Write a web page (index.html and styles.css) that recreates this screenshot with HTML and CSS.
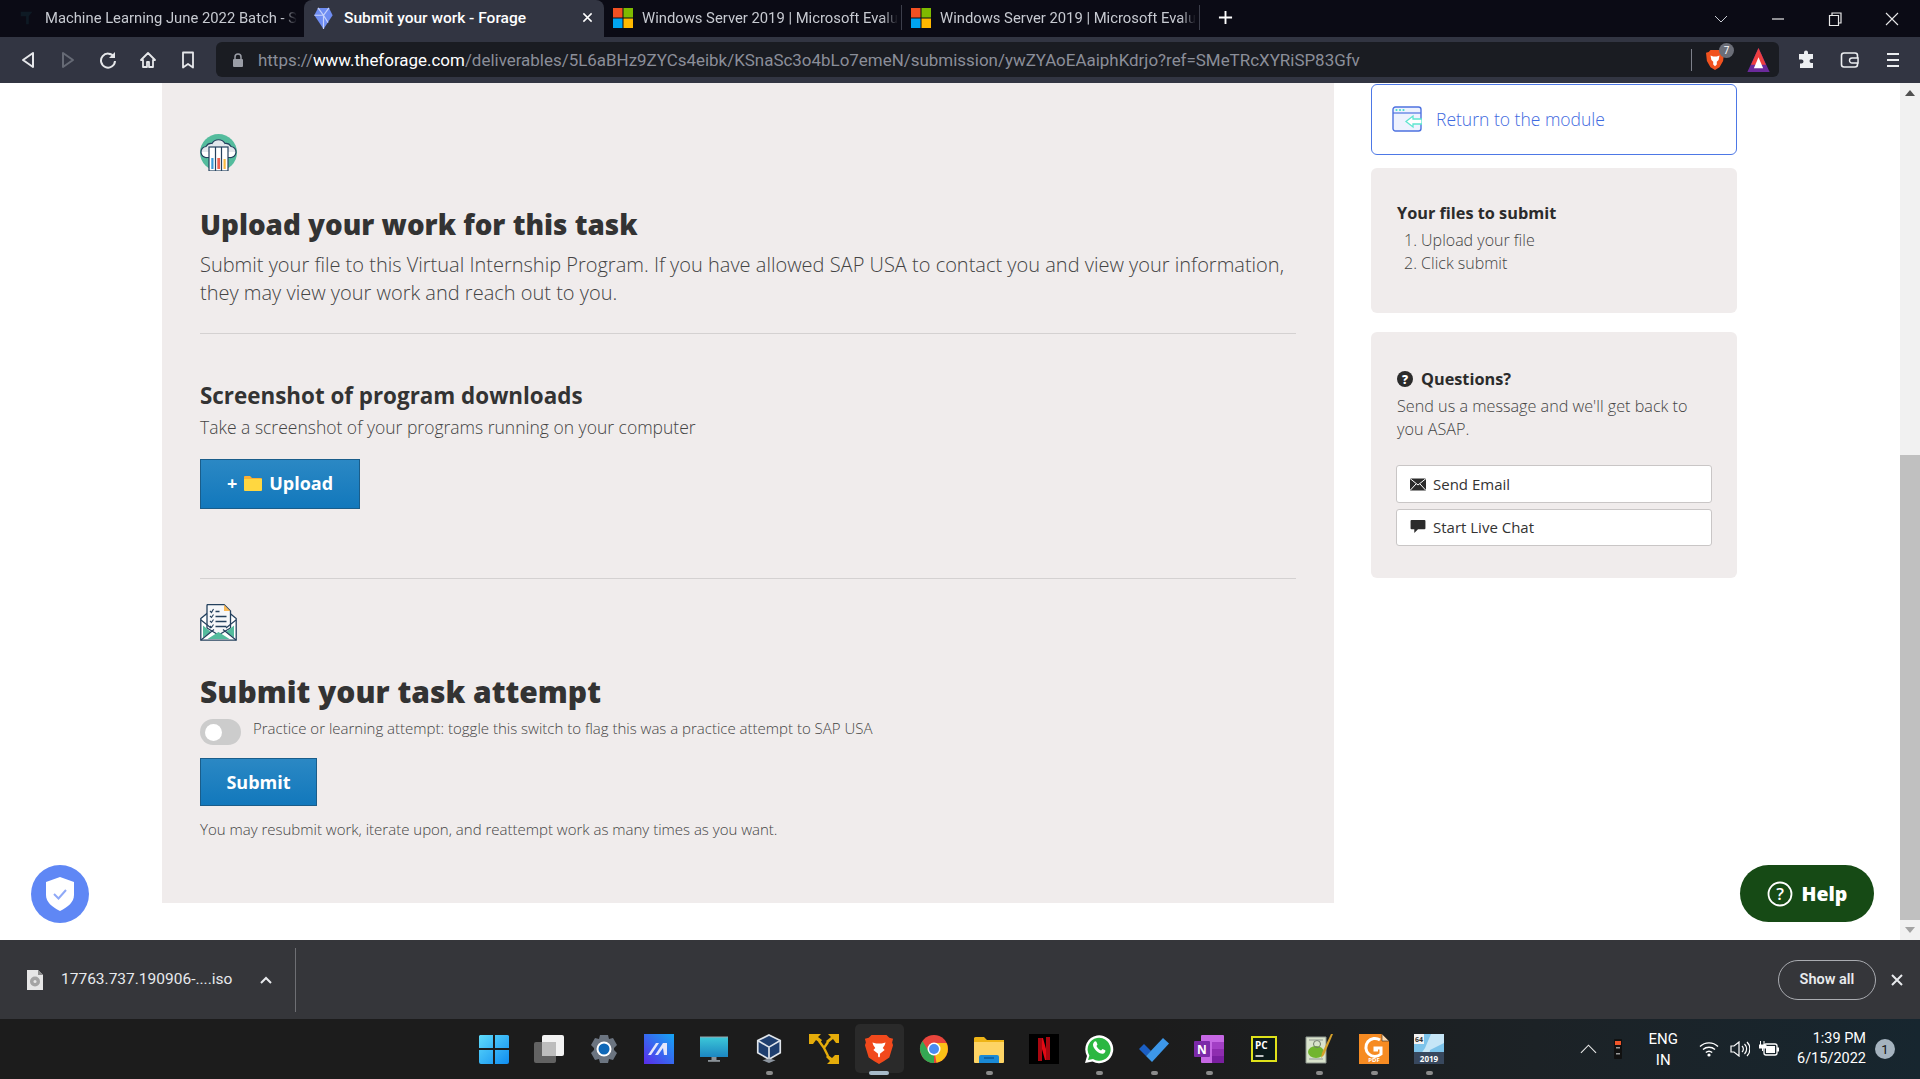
FILE: index.html
```html
<!DOCTYPE html>
<html lang="en">
<head>
<meta charset="utf-8">
<title>Submit your work - Forage</title>
<link rel="stylesheet" href="styles.css">
</head>
<body>
<div class="app">
  <header class="tabstrip">
    <div class="tab tab-first">
      <svg class="fav" viewBox="0 0 20 20"><path d="M3 3h13l-4 5v9H9V8H3z" fill="#0e1a24"/></svg>
      <span class="tab-title">Machine Learning June 2022 Batch - S</span>
    </div>
    <div class="tab tab-active">
      <svg class="fav" viewBox="0 0 20 24"><path d="M4 1h12l4 8-10 15L0 9z" fill="#6f8df2"/><path d="M4 1l6 8 6-8M0 9h10l5 8M10 9v15" fill="none" stroke="#c6d2fb" stroke-width="1.3"/></svg>
      <span class="tab-title">Submit your work - Forage</span>
      <svg class="tab-x" viewBox="0 0 12 12"><path d="M1.500 1.500l9 9m0-9l-9 9" stroke="#fff" stroke-width="1.600"/></svg>
    </div>
    <div class="tab tab-ms">
      <svg class="fav" viewBox="0 0 20 20"><rect width="9.500" height="9.500" fill="#f25022"/><rect x="10.500" width="9.500" height="9.500" fill="#7fba00"/><rect y="10.500" width="9.500" height="9.500" fill="#00a4ef"/><rect x="10.500" y="10.500" width="9.500" height="9.500" fill="#ffb900"/></svg>
      <span class="tab-title">Windows Server 2019 | Microsoft Evalu</span>
    </div>
    <div class="tab tab-ms">
      <svg class="fav" viewBox="0 0 20 20"><rect width="9.500" height="9.500" fill="#f25022"/><rect x="10.500" width="9.500" height="9.500" fill="#7fba00"/><rect y="10.500" width="9.500" height="9.500" fill="#00a4ef"/><rect x="10.500" y="10.500" width="9.500" height="9.500" fill="#ffb900"/></svg>
      <span class="tab-title">Windows Server 2019 | Microsoft Evalu</span>
    </div>
    <svg class="newtab" viewBox="0 0 16 16"><path d="M8 1v14M1 8h14" stroke="#fff" stroke-width="2"/></svg>
    <div class="winctl">
      <svg class="winbtn" viewBox="0 0 14 14"><path d="M1 4l6 6 6-6" fill="none" stroke="#c9ccd3"/></svg>
      <svg class="winbtn" viewBox="0 0 14 14"><path d="M1 7h12" stroke="#e8e8e8" stroke-width="1.200"/></svg>
      <svg class="winbtn" viewBox="0 0 14 14"><path d="M1.500 3.500h9v10h-9zM4 3.500V1h9v10h-2.500" fill="none" stroke="#e8e8e8" stroke-width="1.200"/></svg>
      <svg class="winbtn" viewBox="0 0 14 14"><path d="M1 1l12 12m0-12L1 13" stroke="#e8e8e8" stroke-width="1.100"/></svg>
    </div>
  </header>

  <nav class="toolbar">
    <div class="tool"><svg class="ticon" viewBox="0 0 16 18"><path d="M13 2L3 9l10 7z" fill="none" stroke="#e6e7ea" stroke-width="2" stroke-linejoin="round"/></svg></div>
    <div class="tool"><svg class="ticon" viewBox="0 0 16 18"><path d="M3 2l10 7-10 7z" fill="none" stroke="#666a75" stroke-width="2" stroke-linejoin="round"/></svg></div>
    <div class="tool"><svg class="ticon" viewBox="0 0 18 18"><path d="M15 6a7 7 0 1 0 1 4" fill="none" stroke="#e6e7ea" stroke-width="2"/><path d="M16 1v6h-6z" fill="#e6e7ea"/></svg></div>
    <div class="tool"><svg class="ticon" viewBox="0 0 18 18"><path d="M9 2L2 9h2v7h4v-5h2v5h4V9h2z" fill="none" stroke="#e6e7ea" stroke-width="1.800" stroke-linejoin="round"/></svg></div>
    <div class="tool"><svg class="ticon" viewBox="0 0 16 18"><path d="M3 1.500h10v15l-5-3.500-5 3.500z" fill="none" stroke="#e6e7ea" stroke-width="1.800" stroke-linejoin="round"/></svg></div>
    <div class="omnibox">
      <svg class="lock" viewBox="0 0 12 14"><path d="M3 6V4a3 3 0 0 1 6 0v2" fill="none" stroke="#9a9da6" stroke-width="1.500"/><rect x="1" y="6" width="10" height="8" rx="1" fill="#9a9da6"/></svg>
      <div class="url">https://<b class="host">www.theforage.com</b>/deliverables/5L6aBHz9ZYCs4eibk/KSnaSc3o4bLo7emeN/submission/ywZYAoEAaiphKdrjo?ref=SMeTRcXYRiSP83Gfv</div>
      <span class="omni-sep"></span>
      <div class="brave-ext">
        <svg class="brave-small" viewBox="0 0 20 24"><path d="M5 1h10l2 2 3 1-1 9-4 7-5 3-5-3-4-7L0 4l3-1z" fill="#f1521f"/><path d="M5 7l3 1h4l3-1-1 5-2 2v3l-2 2-2-2v-3l-2-2z" fill="#fff"/></svg>
        <span class="badge-seven">7</span>
      </div>
      <svg class="bat" viewBox="0 0 24 28"><path d="M12 1l12 26H0z" fill="#6b2a9b"/><path d="M12 1l8 18H4z" fill="#ee3f3f"/><path d="M12 11l5 12H7z" fill="#fff"/></svg>
    </div>
    <div class="tool tool-r"><svg class="ticon2" viewBox="0 0 20 20"><path d="M7 2.500a2 2 0 0 1 4 0V4h5v5h-1.500a2 2 0 0 0 0 4H16v5H3v-4.500h1.500a2 2 0 0 0 0-4H2V4h5z" fill="#eceef1"/></svg></div>
    <div class="tool tool-r"><svg class="ticon2" viewBox="0 0 20 20"><rect x="1.500" y="3" width="16" height="14" rx="2.500" fill="none" stroke="#eceef1" stroke-width="1.600"/><path d="M18 8h-6a2 2 0 0 0 0 5h6z" fill="#2f3241" stroke="#eceef1" stroke-width="1.400"/></svg></div>
    <div class="tool tool-r"><svg class="ticon2" viewBox="0 0 20 20"><path d="M4 4h12M4 10h12M4 16h12" stroke="#eceef1" stroke-width="2"/></svg></div>
  </nav>

  <div class="viewport">
    <div class="page">
      <main class="panel">
        <svg class="art" viewBox="0 0 37 37">
          <circle cx="18.500" cy="18.500" r="18.500" fill="#54bc9d"/>
          <path d="M7 23.500a5.500 5.500 0 0 1-1-11 6 6 0 0 1 6-3 7.500 7.500 0 0 1 13 0 6 6 0 0 1 6 3 5.500 5.500 0 0 1-1 11z" fill="#e3e7ec" stroke="#24415e" stroke-width="1.200"/>
          <path d="M2 18a5 5 0 0 0 5 5h23a5 5 0 0 0 5-5z" fill="#fff"/>
          <rect x="9" y="13" width="19" height="24" fill="#fff" stroke="#24415e" stroke-width="1.200"/>
          <path d="M15.500 13v24M21.500 13v24" stroke="#24415e" stroke-width="1.200"/>
          <rect x="11.300" y="24" width="2.200" height="11" fill="#3b9bd8"/><rect x="17.300" y="24" width="2.800" height="11" fill="#f0614f"/><rect x="23.500" y="25" width="2.200" height="10" fill="#f9b942"/>
        </svg>
        <h1 class="title title-upload">Upload your work for this task</h1>
        <p class="lead">Submit your file to this Virtual Internship Program. If you have allowed SAP USA to contact you and view your information, they may view your work and reach out to you.</p>
        <hr class="rule rule-a">
        <h2 class="subtitle">Screenshot of program downloads</h2>
        <p class="hint">Take a screenshot of your programs running on your computer</p>
        <button class="cta cta-upload">
          <span>+</span>
          <svg class="folder" viewBox="0 0 18 16"><path d="M0 2a1 1 0 0 1 1-1h5l2 2h9a1 1 0 0 1 1 1v2H0z" fill="#fbb034"/><path d="M0 4h18v11a1 1 0 0 1-1 1H1a1 1 0 0 1-1-1z" fill="#ffd740"/></svg>
          <span>Upload</span>
        </button>
        <hr class="rule rule-b">
        <svg class="art" viewBox="0 0 37 37">
          <path d="M.8 14.500L7 9.500h23l6.200 5v21.700H.8z" fill="#fff" stroke="#24415e" stroke-width="1.300"/>
          <path d="M7 24V1.500q0-1 1-1h16l6.500 6.500v17l-12 7z" fill="#f6f7f9" stroke="#24415e" stroke-width="1.300"/>
          <path d="M24 .8l6.200 6.200H24z" fill="#fbb955"/>
          <path d="M10 7l1.500 1.500L13.500 5M10 12l1.500 1.500 2-3M10 17l1.500 1.500 2-3M10 22l1.500 1.500 2-3" fill="none" stroke="#24415e" stroke-width="1.100"/>
          <path d="M15.500 7.500h4M15.500 12.500h11M15.500 17.500h11M15.500 22.500h11" stroke="#24415e" stroke-width="1.300"/>
          <path d="M3 21.500l8 6.500-8 5.500zM34 21.500l-8 6.500 8 5.500zM7.500 35l11-7 11 7z" fill="#54bc9d"/>
          <path d="M1 36l13-10.500M36 36L23 25.500M1 16l10 8M36 16l-10 8" fill="none" stroke="#24415e" stroke-width="1.200"/>
        </svg>
        <h1 class="title title-submit">Submit your task attempt</h1>
        <div class="switch-row">
          <span class="switch"><span class="knob"></span></span>
          <span class="switch-label">Practice or learning attempt: toggle this switch to flag this was a practice attempt to SAP USA</span>
        </div>
        <button class="cta cta-submit">Submit</button>
        <p class="note">You may resubmit work, iterate upon, and reattempt work as many times as you want.</p>
      </main>

      <aside class="side">
        <a class="return-card">
          <svg class="return-icon" viewBox="0 0 30 26">
            <rect x="1" y="1" width="28" height="24" rx="2.500" fill="#eef2fe" stroke="#4d72e0" stroke-width="1.400"/>
            <path d="M1 7h28" stroke="#4d72e0" stroke-width="1.200"/>
            <circle cx="4.500" cy="4" r="1.100" fill="#48e0c8"/><circle cx="8" cy="4" r="1.100" fill="#48e0c8"/><circle cx="11.500" cy="4" r="1.100" fill="#48e0c8"/>
            <path d="M30 13h-9v-3l-7 5.500 7 5.500v-3h9z" fill="#fff" stroke="#5ee6cf" stroke-width="1.300"/>
          </svg>
          <span>Return to the module</span>
        </a>
        <section class="card card-files">
          <h3 class="card-title">Your files to submit</h3>
          <ol class="steps">
            <li>Upload your file</li>
            <li>Click submit</li>
          </ol>
        </section>
        <section class="card card-q">
          <h3 class="card-title q-title">
            <svg class="q-icon" viewBox="0 0 16 16"><circle cx="8" cy="8" r="8" fill="#2b2b2b"/><text x="8" y="12.500" text-anchor="middle" class="q-glyph">?</text></svg>
            Questions?
          </h3>
          <p class="q-copy">Send us a message and we'll get back to you ASAP.</p>
          <a class="contact">
            <svg class="contact-ico" viewBox="0 0 16 12"><rect width="16" height="12" fill="#2b2b2b"/><path d="M0 0l8 6.500L16 0M0 12l6-6.500M16 12l-6-6.500" fill="none" stroke="#fff" stroke-width="1"/></svg>
            Send Email
          </a>
          <a class="contact contact-chat">
            <svg class="contact-ico" viewBox="0 0 16 14"><path d="M1 0h14a1 1 0 0 1 1 1v8a1 1 0 0 1-1 1H8l-4 4v-4H1a1 1 0 0 1-1-1V1a1 1 0 0 1 1-1z" fill="#2b2b2b"/></svg>
            Start Live Chat
          </a>
        </section>
      </aside>
    </div>

    <div class="scrollbar">
      <svg class="arrow" viewBox="0 0 10 6"><path d="M5 0l5 6H0z" fill="#505050"/></svg>
      <div class="track"><div class="thumb"></div></div>
      <svg class="arrow" viewBox="0 0 10 6"><path d="M0 0h10L5 6z" fill="#a3a3a3"/></svg>
    </div>

    <div class="shield-btn">
      <svg viewBox="0 0 28 34" class="shield"><path d="M14 0l14 5v13c0 7-6 12-14 16C6 30 0 25 0 18V5z" fill="#fff"/><path d="M8 17l4.500 4.500L20 13" fill="none" stroke="#8fa9f7" stroke-width="2"/></svg>
    </div>
    <div class="help-btn">
      <svg class="help-ico" viewBox="0 0 26 26"><circle cx="13" cy="13" r="11.500" fill="none" stroke="#fff" stroke-width="1.800"/><text x="13" y="19" text-anchor="middle" class="help-glyph">?</text></svg>
      <span>Help</span>
    </div>
  </div>

  <div class="downloads">
    <svg class="dl-file" viewBox="0 0 16 20"><path d="M0 0h11l5 5v15H0z" fill="#e6e6e6"/><path d="M11 0v5h5z" fill="#8c8c8c"/><circle cx="8" cy="11.500" r="5" fill="#a4a4a4"/><circle cx="8" cy="11.500" r="1.500" fill="#e6e6e6"/></svg>
    <span class="dl-name">17763.737.190906-....iso</span>
    <svg class="dl-caret" viewBox="0 0 12 8"><path d="M1 7l5-5 5 5" fill="none" stroke="#e8eaed" stroke-width="2"/></svg>
    <span class="dl-sep"></span>
    <span class="dl-spacer"></span>
    <span class="showall">Show all</span>
    <svg class="dl-close" viewBox="0 0 12 12"><path d="M1 1l10 10m0-10L1 11" stroke="#e8eaed" stroke-width="2"/></svg>
  </div>

  <footer class="taskbar">
    <span></span>
    <div class="apps">
      <div class="app-slot"><svg class="appicon" viewBox="0 0 30 30"><defs><linearGradient id="w" x1="0" y1="0" x2="1" y2="1"><stop offset="0" stop-color="#5fdcfb"/><stop offset="1" stop-color="#0f8cf0"/></linearGradient></defs><path d="M1 1h13v13H0V2zM16 1h12a2 2 0 0 1 2 1v12H16zM0 16h14v14H2a2 2 0 0 1-2-2zM16 16h14v12a2 2 0 0 1-2 2H16z" fill="url(#w)"/></svg></div>
      <div class="app-slot"><svg class="appicon" viewBox="0 0 30 30"><rect x="8" y="1" width="22" height="21" rx="2" fill="#f2f2f2"/><rect x="0" y="8" width="22" height="21" rx="2" fill="#6a6a6a" fill-opacity=".9"/><rect x="8" y="8" width="14" height="14" fill="#bdbdbd"/></svg></div>
      <div class="app-slot"><svg class="appicon" viewBox="0 0 30 30"><path d="M11 1h8l1 4 4-1 4 7-3 3v2l3 3-4 7-4-1-1 4h-8l-1-4-4 1-4-7 3-3v-2L2 11l4-7 4 1z" fill="#6b7480"/><circle cx="15" cy="15" r="7.500" fill="#fff"/><circle cx="15" cy="15" r="5.500" fill="#0f68b8"/></svg></div>
      <div class="app-slot"><svg class="appicon" viewBox="0 0 30 30"><defs><linearGradient id="m" x1="0" y1="1" x2="1" y2="0"><stop offset="0" stop-color="#5a2bea"/><stop offset="1" stop-color="#14a6f5"/></linearGradient></defs><rect width="30" height="30" fill="url(#m)"/><path d="M4 21l8-12h3l-8 12zM11 21l8-12h4v12h-3l-1-7-5 7z" fill="#e4e6fb"/></svg></div>
      <div class="app-slot"><svg class="appicon" viewBox="0 0 30 30"><defs><linearGradient id="mon" x1="0" y1="0" x2="0" y2="1"><stop offset="0" stop-color="#3cc8d8"/><stop offset="1" stop-color="#1c86c2"/></linearGradient></defs><rect x="1" y="3" width="28" height="20" fill="url(#mon)"/><path d="M1 3h28" stroke="#9aa6ad" stroke-width="1"/><rect x="12.500" y="23" width="5" height="3" fill="#8b9298"/><rect x="9" y="26" width="12" height="1.800" fill="#8b9298"/></svg></div>
      <div class="app-slot app-on"><svg class="appicon" viewBox="0 0 30 32"><path d="M15 1l12 6v13l-12 7-12-7V7z" fill="#1f3f6f" stroke="#dfe4ea" stroke-width="1.800"/><path d="M3 7l12 7 12-7M15 14v13" fill="none" stroke="#dfe4ea" stroke-width="1.800"/><path d="M8 28l7 3 7-3-7-2z" fill="#8e96a0"/></svg></div>
      <div class="app-slot"><svg class="appicon" viewBox="0 0 30 30"><path d="M0 0h12L9 3l4 3-2 3-4-3-3 4H0zM30 0H19l3 3-5 4 2 2 5-4 3 4h3zM30 30H18l3-3-4-4 2-2 4 3 3-3h4z" fill="#e5ac0a"/><path d="M10 7l5 7 4-6M15 14l4 8" fill="none" stroke="#e5ac0a" stroke-width="2.400"/></svg></div>
      <div class="app-slot app-brave"><svg class="appicon" viewBox="0 0 30 32"><path d="M7 1h16l3 3 4 1-1 4 1 3-4 13-6 4-5 3-5-3-6-4L0 12l1-3-1-4 4-1z" fill="#f1491c"/><path d="M8 9l4 1h6l4-1-1 3-2 3 2 2-5 4v3l-1 1-1-1v-3l-5-4 2-2-2-3z" fill="#fff"/></svg><span class="bar-active"></span></div>
      <div class="app-slot"><svg class="appicon" viewBox="0 0 30 30"><circle cx="15" cy="15" r="14" fill="#e8453c"/><path d="M15 15L3 22a14 14 0 0 0 12 7z" fill="#34a853"/><path d="M3 22A14 14 0 0 1 3.500 7L10 18l5 11a14 14 0 0 1-12-7z" fill="#34a853"/><path d="M15 9h12.500a14 14 0 0 1-10 19.700L15 15z" fill="#fbc116"/><circle cx="15" cy="15" r="6.500" fill="#fff"/><circle cx="15" cy="15" r="5" fill="#4a8cf0"/></svg></div>
      <div class="app-slot app-on"><svg class="appicon" viewBox="0 0 30 28"><path d="M0 3a2 2 0 0 1 2-1h8l3 3h17v21H0z" fill="#eeb416"/><path d="M0 7h30v20a1 1 0 0 1-1 1H1a1 1 0 0 1-1-1z" fill="#fdd465"/><path d="M5 28v-6a2 2 0 0 1 2-2h16a2 2 0 0 1 2 2v6z" fill="#1a8ad6"/><path d="M10 23h10" stroke="#0d5a9a" stroke-width="1.500"/></svg></div>
      <div class="app-slot"><svg class="appicon" viewBox="0 0 30 30"><rect width="30" height="30" fill="#000"/><path d="M10 4h4l6 22h-4z" fill="#e50914"/><rect x="9" y="4" width="4" height="23" fill="#a80710"/><rect x="17" y="3" width="4" height="23" fill="#a80710"/></svg></div>
      <div class="app-slot app-on"><svg class="appicon" viewBox="0 0 30 30"><path d="M1 29l2-7A14 14 0 1 1 8.500 27.500z" fill="#fff"/><path d="M4 26l1.400-4.600A11.500 11.500 0 1 1 9 25z" fill="#2bb741"/><path d="M10 8c1-1 2-1 2.500 0l1 2.500-1 1.500c1 2 2.500 3.500 4.500 4.500l1.500-1.500 2.800 1.300c.5 1-.5 3-2.300 3.500-4 .5-10-5-10-9 0-1 .7-2 1-2.800z" fill="#fff"/></svg></div>
      <div class="app-slot app-on"><svg class="appicon" viewBox="0 0 30 30"><path d="M0 15l5-5 7 7-5 5z" fill="#1b5fc4"/><path d="M7 22l17-18 6 5.500L13 28z" fill="#3d97e8"/></svg></div>
      <div class="app-slot app-on"><svg class="appicon" viewBox="0 0 30 30"><rect x="7" y="1" width="23" height="28" rx="1" fill="#c667e4"/><rect x="18" y="8" width="12" height="7" fill="#a33fc5"/><rect x="18" y="15" width="12" height="7" fill="#8f2db0"/><rect x="18" y="22" width="12" height="7" fill="#7a1fa0"/><rect y="7" width="16" height="16" rx="1" fill="#7b2aa8"/><text x="8" y="19.500" text-anchor="middle" class="svg-n">N</text></svg></div>
      <div class="app-slot"><svg class="appicon appicon-sq" viewBox="0 0 26 26"><rect width="26" height="26" fill="#dfe21a"/><rect x="2" y="2" width="22" height="22" fill="#0b1a1a"/><text x="4" y="13" class="svg-pc">PC</text><path d="M4.500 20h8" stroke="#fff" stroke-width="1.500"/></svg></div>
      <div class="app-slot app-on"><svg class="appicon" viewBox="0 0 30 30"><path d="M2 3h20v26H2z" fill="#d9e3cc" stroke="#8f9890"/><ellipse cx="12" cy="18" rx="8" ry="6" fill="#72b52e"/><circle cx="13" cy="10" r="3.500" fill="none" stroke="#6f7b6a"/><path d="M5 6h14M5 25h14" stroke="#8f9890"/><path d="M29 0l-9 21-3 3 1-5L27 0z" fill="#d4a02b"/></svg></div>
      <div class="app-slot app-on"><svg class="appicon" viewBox="0 0 30 30"><path d="M0 0h23l7 7v23H0z" fill="#f68b22"/><path d="M23 0l7 7h-7z" fill="#fbd9b0" stroke="#2b2b2b" stroke-width=".6"/><path d="M21 6a9 9 0 1 0 1 14v-6h-6v2h3" fill="none" stroke="#fff" stroke-width="3"/><text x="15" y="28" text-anchor="middle" class="svg-pdf">PDF</text></svg></div>
      <div class="app-slot app-on"><svg class="appicon" viewBox="0 0 30 30"><rect width="30" height="30" fill="#7cc3ea"/><path d="M17 0l-6 14L0 30h14l2-14 14-7V0z" fill="#c6e6f7"/><rect width="10" height="10" fill="#f2f2f2"/><text x="5" y="8" text-anchor="middle" class="svg-64">64</text><rect y="18" width="30" height="12" fill="#38485e"/><text x="15" y="27.500" text-anchor="middle" class="svg-2019">2019</text></svg></div>
    </div>
    <div class="tray">
      <svg class="t-caret" viewBox="0 0 18 10"><path d="M1 9l8-8 8 8" fill="none" stroke="#e8e8e8" stroke-width="1.200"/></svg>
      <svg class="t-light" viewBox="0 0 8 20"><rect width="8" height="20" rx="1" fill="#111"/><rect x="1" y="2" width="6" height="4" fill="#f0552a"/><rect x="2" y="8" width="4" height="1.500" fill="#999"/><rect x="2" y="14" width="4" height="1.500" fill="#999"/></svg>
      <div class="t-lang"><span>ENG</span><span>IN</span></div>
      <svg class="t-wifi" viewBox="0 0 20 16"><path d="M1 5.500a13 13 0 0 1 18 0M4 8.500a9 9 0 0 1 12 0M6.800 11.500a5 5 0 0 1 6.400 0" fill="none" stroke="#fff" stroke-width="1.400"/><circle cx="10" cy="14" r="1.600" fill="#fff"/></svg>
      <svg class="t-vol" viewBox="0 0 20 16"><path d="M1 5h3l5-4v14l-5-4H1z" fill="none" stroke="#fff" stroke-width="1.200"/><path d="M12 5a4 4 0 0 1 0 6M14.500 3a7 7 0 0 1 0 10M17 1a10 10 0 0 1 0 14" fill="none" stroke="#fff" stroke-width="1.200"/></svg>
      <svg class="t-bat" viewBox="0 0 20 16"><rect x="5" y="3" width="13" height="11" rx="2" fill="none" stroke="#fff" stroke-width="1.300"/><rect x="7" y="5" width="9" height="7" fill="#fff"/><rect x="18" y="6.500" width="2" height="4" fill="#fff"/><path d="M0 4h7v3H0zM1.500 0v4M5 0v4M3.500 7v3" stroke="#fff" fill="#fff"/></svg>
      <div class="t-clock"><span>1:39 PM</span><span>6/15/2022</span></div>
      <span class="t-badge">1</span>
    </div>
  </footer>
</div>
</body>
</html>
```
FILE: styles.css
```css
* { box-sizing: border-box; }
html, body { margin: 0; height: 100%; overflow: hidden; }
body { font-family: "Open Sans", "Noto Sans", sans-serif; color: #333; background: #fff; }
h1, h2, h3, p, ol { margin: 0; padding: 0; }

.app { display: flex; flex-direction: column; height: 1079px; }

/* browser tab strip */
.tabstrip { display: flex; height: 37px; background: #0b0b15; flex: none; align-items: stretch; }
.tab { display: flex; align-items: center; width: 298px; font-family: Roboto, sans-serif; font-size: 14.800px; color: #c7cad1; position: relative; flex: none; padding-bottom: 2px; }
.tab-first { width: 304px; padding-left: 18px; }
.tab-first .fav { width: 18px; height: 18px; margin-right: 9px; }
.tab-active { width: 300px; background: #323542; color: #fff; font-weight: 500; font-size: 15.500px; padding-left: 10px; border-radius: 8px 8px 0 0; }
.tab-active .fav { width: 19px; height: 22px; margin-right: 11px; }
.tab-ms { padding-left: 9px; padding-bottom: 0; border-right: 1px solid #3c3e4a; height: 25px; margin-top: 5px; }
.tab-ms .fav { width: 20px; height: 20px; margin-right: 9px; flex: none; }
.tab-title { flex: 1; white-space: nowrap; }
.tab-first .tab-title, .tab-ms .tab-title { -webkit-mask-image: linear-gradient(to right, #000 94%, transparent 100%); mask-image: linear-gradient(to right, #000 94%, transparent 100%); flex: none; }
.tab-x { width: 11px; height: 11px; margin: 0 11px 0 8px; flex: none; }
.newtab { width: 15px; height: 15px; align-self: center; margin: 0 0 2px 18px; flex: none; }
.winctl { margin-left: auto; display: flex; align-items: center; }
.winbtn { width: 14px; height: 14px; margin-right: 43px; }
.winbtn:last-child { margin-right: 21px; }

/* toolbar */
.toolbar { display: flex; height: 46px; background: #323542; padding: 5px 6px 6px 8px; flex: none; align-items: stretch; }
.tool { width: 40px; display: flex; align-items: center; justify-content: center; flex: none; }
.tool-r { width: 43px; }
.ticon { width: 18px; height: 18px; }
.ticon2 { width: 20px; height: 20px; }
.omnibox { flex: 1; margin: 0 6px 0 8px; background: #1a1c22; border-radius: 6px; display: flex; align-items: center; padding: 0 9px 0 16px; }
.lock { width: 12px; height: 14px; flex: none; margin-right: 14px; }
.url { font-family: Roboto, sans-serif; font-size: 16.950px; color: #8b8e99; white-space: nowrap; flex: 1; }
.host { font-weight: 400; color: #fff; }
.omni-sep { width: 1px; height: 22px; background: #7d808a; margin-right: 14px; }
.brave-ext { position: relative; display: flex; margin-right: 23px; }
.brave-small { width: 18px; height: 22px; }
.badge-seven { position: absolute; left: 13px; top: -6px; width: 15px; height: 15px; border-radius: 50%; background: #6b6e78; color: #fff; font-size: 10px; display: flex; align-items: center; justify-content: center; font-family: Roboto, sans-serif; }
.bat { width: 23px; height: 26px; }

/* page viewport */
.viewport { flex: 1; min-height: 0; display: flex; position: relative; overflow: hidden; background: #fff; }
.page { flex: 1; display: flex; align-items: flex-start; gap: 37px; padding-left: 162px; }
.panel { width: 1172px; height: 820px; flex: none; background: #f0ecec; padding: 51px 38px 0 38px; display: flex; flex-direction: column; align-items: flex-start; }
.art { width: 37px; height: 37px; flex: none; display: block; }
.title { line-height: 40px; font-weight: 800; color: #333; }
.title-upload { font-size: 27.800px; margin-top: 33px; }
.title-submit { font-size: 30px; margin-top: 31px; }
.lead { font-size: 20px; line-height: 28px; font-weight: 300; color: #444; margin-top: 7px; }
.rule { width: 100%; border: 0; border-top: 1px solid #d4d1d1; margin: 0; flex: none; }
.rule-a { margin-top: 26px; }
.rule-b { margin-top: 69px; margin-bottom: 25px; }
.subtitle { font-size: 22.400px; line-height: 32px; font-weight: 700; color: #333; margin-top: 46px; }
.hint { font-size: 17.500px; line-height: 26px; font-weight: 300; color: #444; margin-top: 2px; }
.cta { border: 1px solid #1a5d8a; background: linear-gradient(#2b88c4, #1278bc); color: #fff; font-family: inherit; font-weight: 700; font-size: 18px; display: flex; align-items: center; justify-content: center; padding: 0; flex: none; }
.cta-upload { width: 160px; height: 50px; gap: 7px; margin-top: 19px; padding-bottom: 2px; }
.folder { width: 18px; height: 16px; }
.cta-submit { width: 117px; height: 48px; margin-top: 12px; padding-bottom: 1px; }
.switch-row { display: flex; align-items: flex-start; gap: 12px; margin-top: 6px; }
.switch { width: 41px; height: 26px; border-radius: 13px; background: #ccc; display: flex; align-items: center; padding-left: 5px; margin-top: 1px; margin-bottom: 1px; flex: none; }
.knob { width: 17px; height: 17px; border-radius: 50%; background: #fff; }
.switch-label { font-size: 15px; line-height: 21px; font-weight: 300; color: #444; }
.note { font-size: 15px; line-height: 22px; font-weight: 300; color: #444; margin-top: 12px; }

/* sidebar */
.side { width: 366px; flex: none; padding-top: 1px; display: flex; flex-direction: column; }
.return-card { height: 71px; border: 1px solid #4d78e6; border-radius: 6px; display: flex; align-items: center; padding: 0 0 2px 20px; gap: 14px; font-size: 17.500px; font-weight: 300; color: #3f6ae0; }
.return-icon { width: 30px; height: 26px; flex: none; }
.card { background: #f0ecec; border-radius: 6px; padding: 0 25px; }
.card-files { height: 145px; margin-top: 13px; padding: 33px 26px 0; }
.card-q { height: 246px; margin-top: 19px; padding: 35px 25px 0; }
.card-title { font-size: 16.300px; line-height: 24px; font-weight: 700; color: #2b2b2b; }
.steps { list-style-position: inside; font-size: 16px; line-height: 23px; font-weight: 300; color: #444; margin-top: 4px; padding-left: 7px; }
.q-title { display: flex; align-items: center; gap: 8px; padding-left: 1px; }
.q-icon { width: 16px; height: 16px; flex: none; }
.q-glyph { font-size: 12px; font-weight: 800; fill: #fff; }
.q-copy { font-size: 16.200px; line-height: 23px; font-weight: 300; color: #444; margin-top: 4px; padding-left: 1px; }
.contact { height: 38px; background: #fff; border: 1px solid #c9c6c6; border-radius: 3px; display: flex; align-items: center; padding-left: 13px; gap: 7px; font-size: 15px; color: #333; margin: 24px 0 0 0; }
.contact-chat { height: 37px; margin-top: 6px; padding-bottom: 2px; }
.contact-ico { width: 16px; height: 13px; flex: none; }

/* scrollbar */
.scrollbar { width: 20px; flex: none; background: #f1f1f1; display: flex; flex-direction: column; align-items: center; }
.arrow { width: 10px; height: 6px; margin: 7px 0; flex: none; }
.track { flex: 1; width: 100%; display: flex; flex-direction: column; justify-content: flex-end; }
.thumb { height: 465px; background: #c0c0c0; }

/* floating widgets */
.shield-btn { position: absolute; left: 31px; top: 782px; width: 58px; height: 58px; border-radius: 50%; background: #5f87f5; display: flex; align-items: center; justify-content: center; }
.shield { width: 28px; height: 34px; }
.help-btn { position: absolute; left: 1740px; top: 782px; width: 134px; height: 57px; border-radius: 29px; background: #164a15; color: #fff; font-weight: 800; font-size: 19.500px; display: flex; align-items: center; justify-content: center; gap: 9px; }
.help-ico { width: 26px; height: 26px; }
.help-glyph { font-size: 17px; font-weight: 600; fill: #fff; }

/* downloads bar */
.downloads { height: 79px; background: #35363a; display: flex; align-items: center; flex: none; padding-left: 27px; color: #e8eaed; font-family: Roboto, sans-serif; }
.dl-file { width: 16px; height: 20px; flex: none; }
.dl-name { font-size: 15.500px; margin-left: 18px; width: 184px; white-space: nowrap; padding-bottom: 1px; }
.dl-caret { width: 12px; height: 8px; margin-left: 15px; }
.dl-sep { width: 1px; height: 64px; background: #6e6f73; margin-left: 23px; }
.dl-spacer { flex: 1; }
.showall { width: 98px; height: 40px; border: 1px solid #a9abb0; border-radius: 20px; display: flex; align-items: center; justify-content: center; font-size: 14.500px; font-weight: 600; padding-bottom: 1px; }
.dl-close { width: 12px; height: 12px; margin: 0 17px 0 15px; }

/* taskbar */
.taskbar { height: 60px; flex: none; background: linear-gradient(90deg, #1c1c1c 0%, #1c1c1c 60%, #1c2226 80%, #17262f 100%); display: grid; grid-template-columns: 1fr auto 1fr; align-items: center; color: #fff; font-family: Roboto, sans-serif; }
.apps { display: flex; padding-left: 3px; }
.app-slot { width: 55px; height: 60px; display: flex; align-items: center; justify-content: center; position: relative; }
.appicon { width: 30px; height: 30px; }
.appicon-sq { width: 26px; height: 26px; }
.app-on::after { content: ""; position: absolute; left: 24px; bottom: 4px; width: 7px; height: 4px; border-radius: 2px; background: #8b8b8b; }
.app-brave::before { content: ""; position: absolute; left: 3px; top: 5px; width: 49px; height: 49px; border-radius: 5px; background: #2a2a2a; }
.app-brave .appicon { position: relative; }
.bar-active { position: absolute; left: 17px; bottom: 4px; width: 20px; height: 4px; border-radius: 2px; background: #a7bac9; }
.svg-n { font: 700 12px "Open Sans", sans-serif; fill: #fff; }
.svg-pc { font: 700 10px "Open Sans", sans-serif; fill: #fff; }
.svg-pdf { font: 700 6px "Open Sans", sans-serif; fill: #fff; }
.svg-64 { font: 700 7px "Open Sans", sans-serif; fill: #333; }
.svg-2019 { font: 700 8px "Open Sans", sans-serif; fill: #fff; }
.tray { display: flex; align-items: center; justify-content: flex-end; }
.t-caret { width: 17px; height: 10px; margin-right: 17px; }
.t-light { width: 8px; height: 20px; margin-right: 27px; }
.t-lang { display: flex; flex-direction: column; align-items: center; font-size: 15px; line-height: 21px; margin-right: 21px; padding-top: 1px; }
.t-wifi { width: 20px; height: 16px; margin-right: 11px; }
.t-vol { width: 20px; height: 16px; margin-right: 9px; }
.t-bat { width: 20px; height: 16px; margin-right: 18px; }
.t-clock { display: flex; flex-direction: column; align-items: flex-end; font-size: 14.500px; line-height: 20px; margin-right: 9px; }
.t-badge { width: 20px; height: 20px; border-radius: 50%; background: #a5b3bf; color: #111; font-size: 13px; display: flex; align-items: center; justify-content: center; margin-right: 25px; }
```
